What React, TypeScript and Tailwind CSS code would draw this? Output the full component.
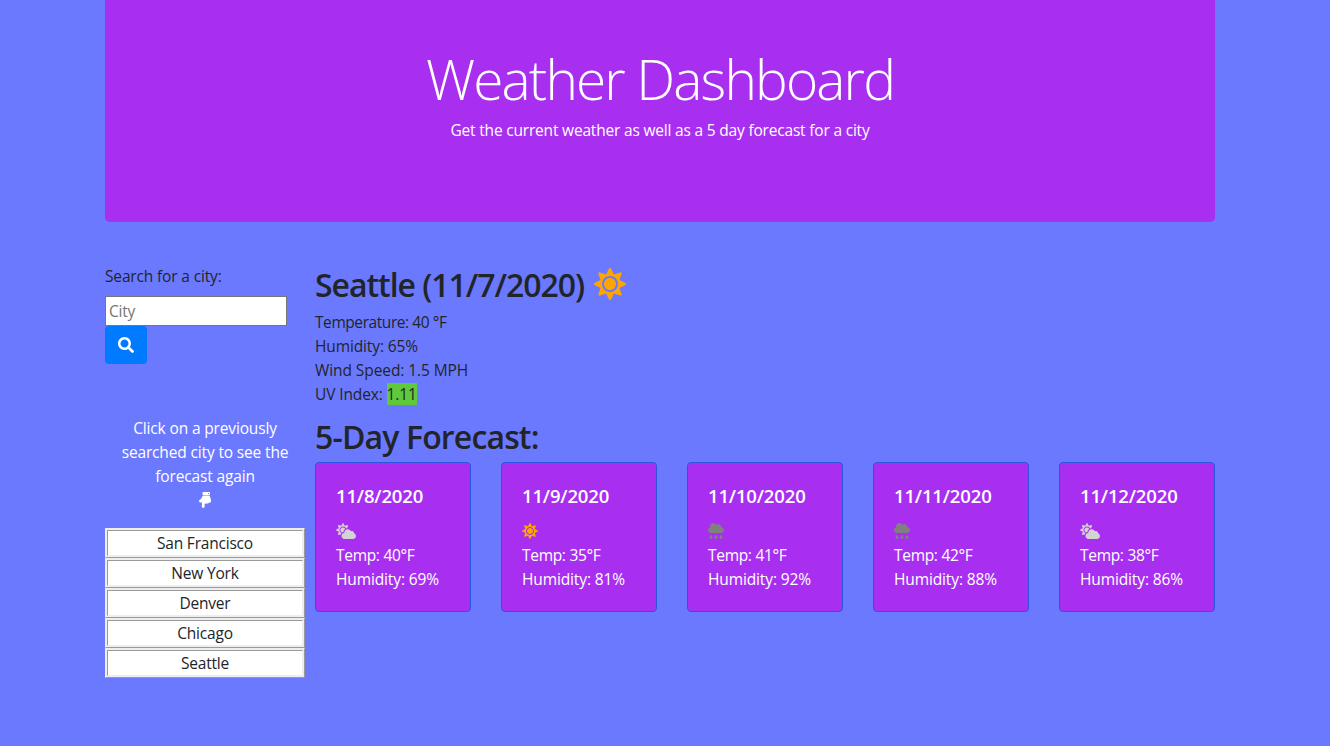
import type { ReactNode } from "react";
import { FaCloudRain, FaCloudSun, FaHandPointDown, FaSearch, FaSun } from "react-icons/fa";

type Sky = "sun" | "partly" | "rain";

const cities = ["San Francisco", "New York", "Denver", "Chicago", "Seattle"];

const days: { date: string; sky: Sky; temp: number; humidity: number }[] = [
  { date: "11/8/2020", sky: "partly", temp: 40, humidity: 69 },
  { date: "11/9/2020", sky: "sun", temp: 35, humidity: 81 },
  { date: "11/10/2020", sky: "rain", temp: 41, humidity: 92 },
  { date: "11/11/2020", sky: "rain", temp: 42, humidity: 88 },
  { date: "11/12/2020", sky: "partly", temp: 38, humidity: 86 },
];

const skyIcons: Record<Sky, ReactNode> = {
  sun: <FaSun className="size-4 text-[#ffa500]" />,
  partly: <FaCloudSun className="h-4 w-5 text-[#d3d3d3]" />,
  rain: <FaCloudRain className="size-4 text-[#808080]" />,
};

function DayCard({ date, sky, temp, humidity }: (typeof days)[number]) {
  return (
    <div className="h-[150px] w-[156px] rounded border border-[#2a55e0] bg-[#a82ff0] p-5 text-white">
      <h5 className="mb-2 pt-px text-[18.5px] leading-6 font-semibold tracking-[-0.15px]">{date}</h5>
      <div className="flex h-[27px] items-center pt-[3px]">{skyIcons[sky]}</div>
      <p className="tracking-[-0.3px]">Temp: {temp}°F</p>
      <p className="tracking-[-0.12px]">Humidity: {humidity}%</p>
    </div>
  );
}

export default function App() {
  return (
    <div className="min-h-[746px] bg-[#6b79ff] pr-[10px] font-['Open_Sans','Noto_Sans',sans-serif] text-[15.5px] leading-6 text-[#212529]">
      <div className="mx-auto w-[1110px]">
        <header className="h-[222px] rounded-b-[5px] bg-[#a82ff0] pt-[45px] text-center text-white">
          <h1 className="text-[55px] leading-[67px] font-light tracking-[-1.85px]">Weather Dashboard</h1>
          <p className="mt-[6px] tracking-[-0.19px]">Get the current weather as well as a 5 day forecast for a city</p>
        </header>
        <main className="flex gap-[10px] pt-[42px]">
          <aside className="w-[200px]">
            <label htmlFor="city" className="block tracking-[-0.15px]">Search for a city:</label>
            <input
              id="city"
              placeholder="City"
              className="mt-2 block h-[30px] w-[182px] border border-[#767676] bg-white px-[3px] tracking-[-0.2px] placeholder:text-[#757575]"
            />
            <button aria-label="Search" className="flex h-[38px] w-[42px] items-center justify-center rounded bg-[#007bff] text-white">
              <FaSearch className="size-4" />
            </button>
            <div className="mt-[52px] flex flex-col items-center text-center tracking-[-0.15px] text-white">
              <p>Click on a previously<br />searched city to see the<br />forecast again</p>
              <FaHandPointDown className="mt-1 h-4 w-3" />
            </div>
            <ul className="mt-5 bg-white text-center tracking-[-0.2px]">
              {cities.map((city) => (
                <li key={city} className="h-[30px] border-[3px] border-[#eeeeee] [border-style:ridge]">
                  {city}
                </li>
              ))}
            </ul>
          </aside>
          <section className="w-[900px]">
            <h2 className="flex h-[38px] items-center text-[32px] font-semibold">
              <span className="pt-[3px] tracking-[-1.04px]">Seattle (11/7/2020)</span>
              <FaSun className="mt-0.5 ml-[10px] size-8 text-[#ffa500]" />
            </h2>
            <div className="mt-2">
              <p className="tracking-[-0.43px]">Temperature: 40 °F</p>
              <p className="tracking-[-0.12px]">Humidity: 65%</p>
              <p className="tracking-[-0.08px]">Wind Speed: 1.5 MPH</p>
              <p className="tracking-[-0.12px]">UV Index: <span className="bg-[#5fc93a]">1.11</span></p>
            </div>
            <h2 className="mt-3 flex h-[38px] items-center text-[32px] font-semibold tracking-[-0.85px]">5-Day Forecast:</h2>
            <div className="mt-1.5 flex justify-between">
              {days.map((day) => <DayCard key={day.date} {...day} />)}
            </div>
          </section>
        </main>
      </div>
    </div>
  );
}
